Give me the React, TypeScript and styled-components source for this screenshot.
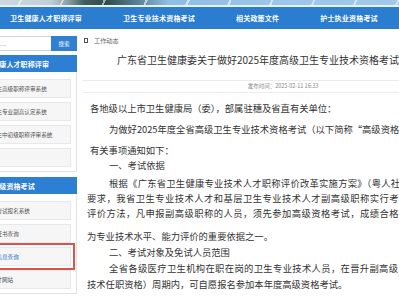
import React from "react";
import styled, { createGlobalStyle, css } from "styled-components";

const GlobalStyle = createGlobalStyle`
  *, *::before, *::after { box-sizing: border-box; }
  html, body { margin: 0; padding: 0; overflow: hidden; background: #fff; }
  body {
    font-family: "Noto Sans CJK SC", "Noto Sans", sans-serif;
    color: #333;
  }
`;

const Page = styled.div`
  width: 560px;
  display: flex;
  flex-direction: column;
`;

const Banner = styled.div`
  height: 7px;
  border-bottom: 2px solid #e9f2fb;
  background:
    repeating-linear-gradient(115deg, rgba(255,255,255,0) 0 18px, rgba(255,255,255,0.55) 18px 20px, rgba(255,255,255,0) 20px 38px),
    linear-gradient(90deg, #cdd8e0 0%, #c2cfd9 9%, #8fa2ab 12%, #3f5f5c 15%, #2e4c48 19%, #557c8e 24%, #8fbde3 30%, #9cc6ea 50%, #a7cdee 100%);
`;

const Nav = styled.nav`
  height: 22px;
  background: #2a7dcf;
  display: flex;
  align-items: center;
  gap: 41px;
  padding-left: 10px;
`;

const NavItem = styled.a`
  color: #fff;
  font-size: 7px;
  font-weight: 700;
  letter-spacing: 0.2px;
  line-height: 1;
  white-space: nowrap;
  text-decoration: none;
`;

const Body = styled.div`
  display: flex;
  align-items: flex-start;
`;

const Sidebar = styled.aside`
  flex: none;
  width: 77px;
  overflow: hidden;
`;

const SideInner = styled.div`
  width: 200px;
  margin-left: -123px;
  padding: 7px 0 4px;
`;

const SearchRow = styled.div`
  display: flex;
  height: 15px;
`;

const SearchBox = styled.div`
  flex: 1;
  border: 1px solid #d2d2d2;
  border-right: none;
  display: flex;
  align-items: center;
  justify-content: flex-end;
  padding-right: 45px;
  font-size: 5.5px;
  color: #999;
  white-space: nowrap;
  overflow: hidden;
`;

const SearchButton = styled.button`
  width: 26px;
  border: none;
  padding: 0;
  background: #2f80d1;
  color: #fff;
  font-family: inherit;
  font-size: 5.6px;
`;

const Panel = styled.section<{ $mt: number }>`
  margin-top: ${(p) => p.$mt}px;
  border: 1px solid #e2e2e2;
  border-top: none;
  background: #fff;
`;

const PanelHeader = styled.h3`
  margin: 0 -1px;
  height: 17px;
  background: #2d7fd3;
  color: #fff;
  font-size: 7px;
  font-weight: 700;
  letter-spacing: 0.1px;
  display: flex;
  align-items: center;
  padding-left: 101px;
  white-space: nowrap;
`;

const ItemList = styled.div`
  display: flex;
  flex-direction: column;
  gap: 4px;
  padding: 7px 5px 4px;
`;

const Item = styled.a<{ $active?: boolean }>`
  height: 19px;
  display: flex;
  align-items: center;
  padding-left: 90px;
  background: #f6f6f6;
  border: 1px solid #e8e8e8;
  font-size: 5.6px;
  color: ${(p) => (p.$active ? "#2a72c2" : "#555")};
  white-space: nowrap;
  overflow: hidden;
  ${(p) =>
    p.$active &&
    css`
      outline: 2px solid #d9534f;
      outline-offset: 2px;
    `}
`;

const Main = styled.main`
  flex: none;
  width: 406px;
  margin-left: 3px;
`;

const Crumb = styled.div`
  margin-top: 6px;
  height: 10px;
  display: flex;
  align-items: center;
  gap: 6px;
  padding-left: 4px;
  font-size: 6.2px;
  color: #666;
`;

const CrumbIcon = styled.span`
  width: 4px;
  height: 5px;
  border: 1px solid #555;
`;

const Title = styled.h1`
  margin: 5px 0 0;
  font-size: 10px;
  line-height: 20px;
  font-weight: 400;
  color: #333;
  text-align: center;
  white-space: nowrap;
`;

const Meta = styled.div`
  margin: 10px 2px 0;
  border-top: 1px solid #ececec;
  border-bottom: 1px solid #ececec;
  line-height: 11px;
  font-size: 5.5px;
  color: #888;
  text-align: center;
`;

const Article = styled.article`
  padding: 5px 0 0 7px;
`;

const Line = styled.p<{ $lh: number; $mt?: number; $indent?: number; $ls?: number }>`
  margin: ${(p) => p.$mt ?? 0}px 0 0;
  padding-left: ${(p) => p.$indent ?? 0}px;
  line-height: ${(p) => p.$lh}px;
  font-size: 9.3px;
  letter-spacing: ${(p) => p.$ls ?? 0}px;
  color: #333;
  white-space: nowrap;
`;

const navItems = ["卫生健康人才职称评审", "卫生专业技术资格考试", "相关政策文件", "护士执业资格考试"];

export default function App() {
  return (
    <>
      <GlobalStyle />
      <Page>
        <Banner />
        <Nav>
          {navItems.map((n) => (
            <NavItem key={n}>{n}</NavItem>
          ))}
        </Nav>
        <Body>
          <Sidebar>
            <SideInner>
              <SearchRow>
                <SearchBox>请输入关键字......</SearchBox>
                <SearchButton>搜索</SearchButton>
              </SearchRow>
              <Panel $mt={4}>
                <PanelHeader>卫生健康人才职称评审</PanelHeader>
                <ItemList>
                  <Item>广东省卫生高级职称评审系统</Item>
                  <Item>广东省卫生专业副高认定系统</Item>
                  <Item>广东省卫生中初级职称评审系统</Item>
                  <Item />
                </ItemList>
              </Panel>
              <Panel $mt={5}>
                <PanelHeader>卫生高级资格考试</PanelHeader>
                <ItemList>
                  <Item>高级资格考试报名系统</Item>
                  <Item>考试合格证书查询</Item>
                  <Item $active>考试成绩信息查询</Item>
                  <Item>省卫生人才网站</Item>
                </ItemList>
              </Panel>
            </SideInner>
          </Sidebar>
          <Main>
            <Crumb>
              <CrumbIcon />
              <span>工作动态</span>
            </Crumb>
            <Title>广东省卫生健康委关于做好2025年度高级卫生专业技术资格考试工作的通知</Title>
            <Meta>发布时间：2025-02-11 16:33</Meta>
            <Article>
              <Line $lh={21} $indent={3}>各地级以上市卫生健康局（委），部属驻穗及省直有关单位：</Line>
              <Line $lh={21} $indent={22}>为做好2025年度全省高级卫生专业技术资格考试（以下简称“高级资格考试”），现将</Line>
              <Line $lh={21} $indent={3}>有关事项通知如下：</Line>
              <Line $lh={14} $mt={-3} $indent={22}>一、考试依据</Line>
              <Line $lh={15} $mt={3.5} $indent={22} $ls={0.25}>根据《广东省卫生健康专业技术人才职称评价改革实施方案》（粤人社规〔2021〕20号）</Line>
              <Line $lh={15} $ls={0.45}>要求，我省卫生专业技术人才和基层卫生专业技术人才副高级职称实行考试与评审相结合的</Line>
              <Line $lh={15} $ls={0.45}>评价方法，凡申报副高级职称的人员，须先参加高级资格考试，成绩合格者，其考试成绩作</Line>
              <Line $lh={15} $mt={8}>为专业技术水平、能力评价的重要依据之一。</Line>
              <Line $lh={16} $indent={22}>二、考试对象及免试人员范围</Line>
              <Line $lh={16} $indent={22} $ls={0.35}>全省各级医疗卫生机构在职在岗的卫生专业技术人员，在晋升副高级专业</Line>
              <Line $lh={16}>技术任职资格）周期内，可自愿报名参加本年度高级资格考试。</Line>
            </Article>
          </Main>
        </Body>
      </Page>
    </>
  );
}
